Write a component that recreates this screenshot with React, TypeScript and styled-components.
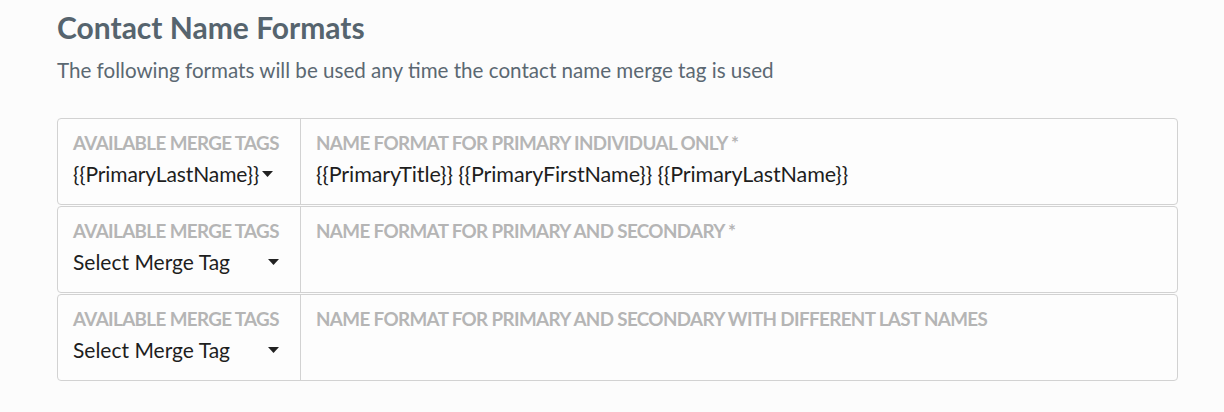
import React from 'react';
import styled, { createGlobalStyle } from 'styled-components';

const GlobalStyle = createGlobalStyle`
    body {
        margin: 0;
        background: #fcfcfc;
        font-family: Lato, "Open Sans", sans-serif;
    }
`

type Row = {
    label: string;
    tag?: string;
    value?: string;
};

const rows: Row[] = [
    {
        label: 'Name Format For Primary Individual Only *',
        tag: '{{PrimaryLastName}}',
        value: '{{PrimaryTitle}} {{PrimaryFirstName}} {{PrimaryLastName}}',
    },
    { label: 'Name Format For Primary And Secondary *' },
    { label: 'Name Format For Primary And Secondary With Different Last Names' },
];

const Caret = () => (
    <svg width="11" height="6" viewBox="0 0 11 6">
        <path d="M0 0 L11 0 L5.5 6 Z" fill="#222" />
    </svg>
);

const App = () => {
    return (
        <Page>
            <GlobalStyle />
            <Title>Contact Name Formats</Title>
            <Subtitle>The following formats will be used any time the contact name merge tag is used</Subtitle>
            <Rows>
                {rows.map((row) => (
                    <FormatRow key={row.label}>
                        <TagCell>
                            <Label>Available Merge Tags</Label>
                            <TagSelect filled={!!row.tag}>
                                <span>{row.tag ?? 'Select Merge Tag'}</span>
                                <Caret />
                            </TagSelect>
                        </TagCell>
                        <FormatCell>
                            <Label>{row.label}</Label>
                            <FormatValue>{row.value ?? ''}</FormatValue>
                        </FormatCell>
                    </FormatRow>
                ))}
            </Rows>
        </Page>
    );
}

export default App;

const Page = styled.div`
    padding: 10px 46px 0 57px;
`
const Title = styled.h1`
    margin: 0;
    font-size: 30px;
    font-weight: 700;
    color: #56646e;
    line-height: 34px;
`
const Subtitle = styled.p`
    margin: 9px 0 0;
    font-size: 20.6px;
    color: #5b6872;
    line-height: 34px;
`
const Rows = styled.div`
    display: flex;
    flex-direction: column;
    gap: 1px;
    margin-top: 31px;
`
const FormatRow = styled.div`
    display: flex;
    height: 85px;
    border: 1px solid #d2d2d2;
    border-radius: 4px;
    background: #fdfdfd;
`
const TagCell = styled.div`
    width: 227px;
    padding: 13px 0 0 15px;
    border-right: 1px solid #d2d2d2;
`
const FormatCell = styled.div`
    flex: 1;
    padding: 13px 0 0 15px;
`
const Label = styled.div`
    font-size: 18.8px;
    font-weight: 700;
    text-transform: uppercase;
    color: #b5b5b5;
    letter-spacing: -0.62px;
    line-height: 22px;
    white-space: nowrap;
`
const TagSelect = styled.div<{ filled: boolean }>`
    display: flex;
    align-items: center;
    gap: ${(p) => (p.filled ? '3px' : '0')};
    justify-content: ${(p) => (p.filled ? 'flex-start' : 'space-between')};
    width: ${(p) => (p.filled ? 'auto' : '206px')};
    margin-top: 7px;
    font-size: 21px;
    color: #1e1e1e;
    line-height: 26px;
    letter-spacing: ${(p) => (p.filled ? '-0.1px' : '0')};
`
const FormatValue = styled.div`
    margin-top: 7px;
    font-size: 21.5px;
    color: #1e1e1e;
    line-height: 26px;
    letter-spacing: -0.1px;
`
